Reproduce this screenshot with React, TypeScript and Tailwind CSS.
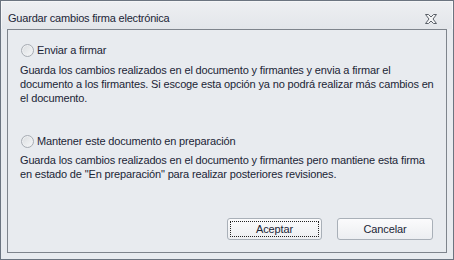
import React from "react";

function Radio() {
  return (
    <span className="inline-block w-[13px] h-[13px] rounded-full border border-[#a7acb3] bg-gradient-to-br from-[#d9dcdf] to-[#f7f8f9] shadow-[inset_0_0_0_1px_#eef0f2] shrink-0" />
  );
}

function CloseIcon() {
  return (
    <svg width="12" height="10" viewBox="0 0 12 10">
      <path
        d="M0.5 0.5 H3.5 L6 3 L8.5 0.5 H11.5 L8 5 L11.5 9.5 H8.5 L6 7 L3.5 9.5 H0.5 L4 5 Z"
        fill="#f4f5f6"
        stroke="#5a6068"
        strokeWidth="1"
        strokeLinejoin="round"
      />
    </svg>
  );
}

export default function App() {
  return (
    <div
      className="w-[454px] h-[260px] border border-[#6b7480] bg-[#e8ebef] flex flex-col text-[11px] tracking-[-0.15px] text-[#1b2536]"
      style={{ fontFamily: '"Liberation Sans", Arial, sans-serif' }}
    >
      <div className="h-[28px] shrink-0 border-t border-l border-r border-white/60 bg-gradient-to-b from-[#edeff2] to-[#e3e6ea] flex items-center justify-between pl-[6px] pr-[15px] pt-[6px]">
        <span className="text-[11px] tracking-[-0.2px]">Guardar cambios firma electrónica</span>
        <CloseIcon />
      </div>
      <div className="flex-1 px-[6px] pb-[6px] flex">
        <div className="flex-1 border border-[#7e848c] bg-[#e8ebef] flex flex-col pl-[12px] pr-[12px] pt-[13px] pb-[12px]">
          <div className="flex items-center gap-[3px] h-[14px] ml-[1px]">
            <Radio />
            <span>Enviar a firmar</span>
          </div>
          <p className="mt-[6px] leading-[14px]">
            Guarda los cambios realizados en el documento y firmantes y envia a firmar el documento a los firmantes. Si escoge esta opción ya no podrá realizar más cambios en el documento.
          </p>
          <div className="flex items-center gap-[3px] h-[14px] ml-[1px] mt-[29px]">
            <Radio />
            <span>Mantener este documento en preparación</span>
          </div>
          <p className="mt-[5px] leading-[14px]">
            Guarda los cambios realizados en el documento y firmantes pero mantiene esta firma en estado de "En preparación" para realizar posteriores revisiones.
          </p>
          <div className="flex-1" />
          <div className="flex justify-end gap-[15px] pr-[1px]">
            <button className="w-[95px] h-[22px] rounded-[3px] border border-[#a9b0b8] bg-gradient-to-b from-[#fbfbfc] to-[#eceef1] p-[2px]">
              <span className="flex items-center justify-center w-full h-full border border-dotted border-[#222]">Aceptar</span>
            </button>
            <button className="w-[96px] h-[22px] rounded-[3px] border border-[#a9b0b8] bg-gradient-to-b from-[#fbfbfc] to-[#eceef1] flex items-center justify-center">
              Cancelar
            </button>
          </div>
        </div>
      </div>
    </div>
  );
}
